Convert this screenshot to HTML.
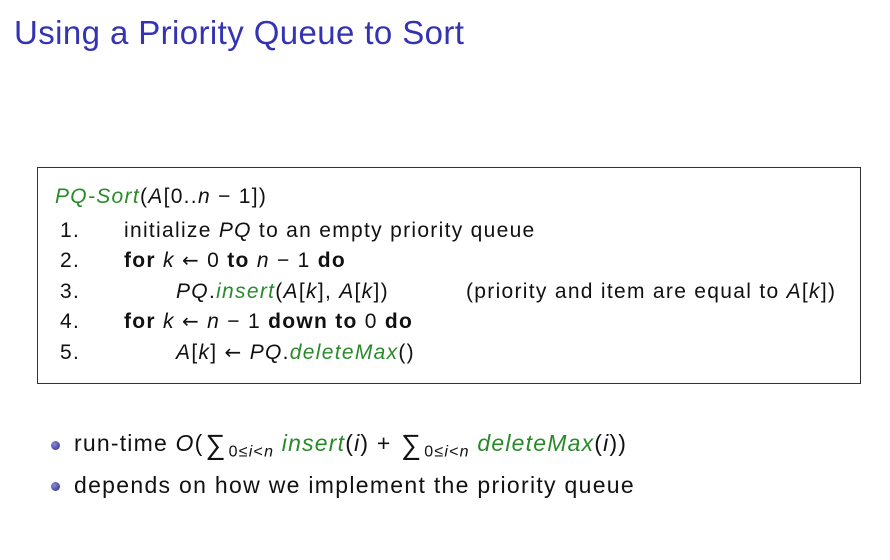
<!DOCTYPE html>
<html><head><meta charset="utf-8"><style>
body{margin:0;width:890px;height:560px;background:#fff;position:relative;overflow:hidden;font-family:"Liberation Sans",sans-serif;color:#111}
.t{position:absolute;white-space:nowrap;line-height:1}
.g{color:#2a8a2a;font-style:italic}
i{font-style:italic}
.a{font-family:"DejaVu Sans",sans-serif;font-size:0.95em}
.box{position:absolute;left:37px;top:167px;width:822px;height:215px;border:1px solid #333}
.l{font-size:21px;letter-spacing:1.3px}
.s{font-size:28px;vertical-align:-3px;margin:0 2px}
.dot{position:absolute;width:9px;height:9px;border-radius:50%;background:radial-gradient(circle at 35% 35%,#8a8ad8,#2a2a80)}
</style></head><body>
<div class="t" style="left:14px;top:16px;font-size:33px;letter-spacing:0.4px;color:#3333b3">Using a Priority Queue to Sort</div>
<div class="box"></div>
<div class="t l" style="left:55px;top:186px"><span class="g">PQ-Sort</span>(<i>A</i>[0..<i>n</i> − 1])</div>
<div class="t l" style="left:60px;top:220px">1.</div>
<div class="t l" style="left:124px;top:220px">initialize <i>PQ</i> to an empty priority queue</div>
<div class="t l" style="left:60px;top:250px">2.</div>
<div class="t l" style="left:124px;top:250px"><b>for</b> <i>k</i> <span class="a">←</span> 0 <b>to</b> <i>n</i> − 1 <b>do</b></div>
<div class="t l" style="left:60px;top:281px">3.</div>
<div class="t l" style="left:176px;top:281px"><i>PQ</i>.<span class="g">insert</span>(<i>A</i>[<i>k</i>], <i>A</i>[<i>k</i>])</div>
<div class="t l" style="left:466px;top:281px">(priority and item are equal to <i>A</i>[<i>k</i>])</div>
<div class="t l" style="left:60px;top:311px">4.</div>
<div class="t l" style="left:124px;top:311px"><b>for</b> <i>k</i> <span class="a">←</span> <i>n</i> − 1 <b>down to</b> 0 <b>do</b></div>
<div class="t l" style="left:60px;top:342px">5.</div>
<div class="t l" style="left:176px;top:342px"><i>A</i>[<i>k</i>] <span class="a">←</span> <i>PQ</i>.<span class="g">deleteMax</span>()</div>
<div class="dot" style="left:51px;top:441px"></div>
<div class="t" style="left:74px;top:431px;font-size:23px;letter-spacing:1.2px">run-time <i>O</i>(<span class="s">∑</span><sub style="font-size:16px">0≤<i>i</i>&lt;<i>n</i></sub> <span class="g">insert</span>(<i>i</i>) + <span class="s">∑</span><sub style="font-size:16px">0≤<i>i</i>&lt;<i>n</i></sub> <span class="g">deleteMax</span>(<i>i</i>))</div>
<div class="dot" style="left:51px;top:482px"></div>
<div class="t" style="left:74px;top:474px;font-size:23px;letter-spacing:1.3px">depends on how we implement the priority queue</div>
</body></html>
